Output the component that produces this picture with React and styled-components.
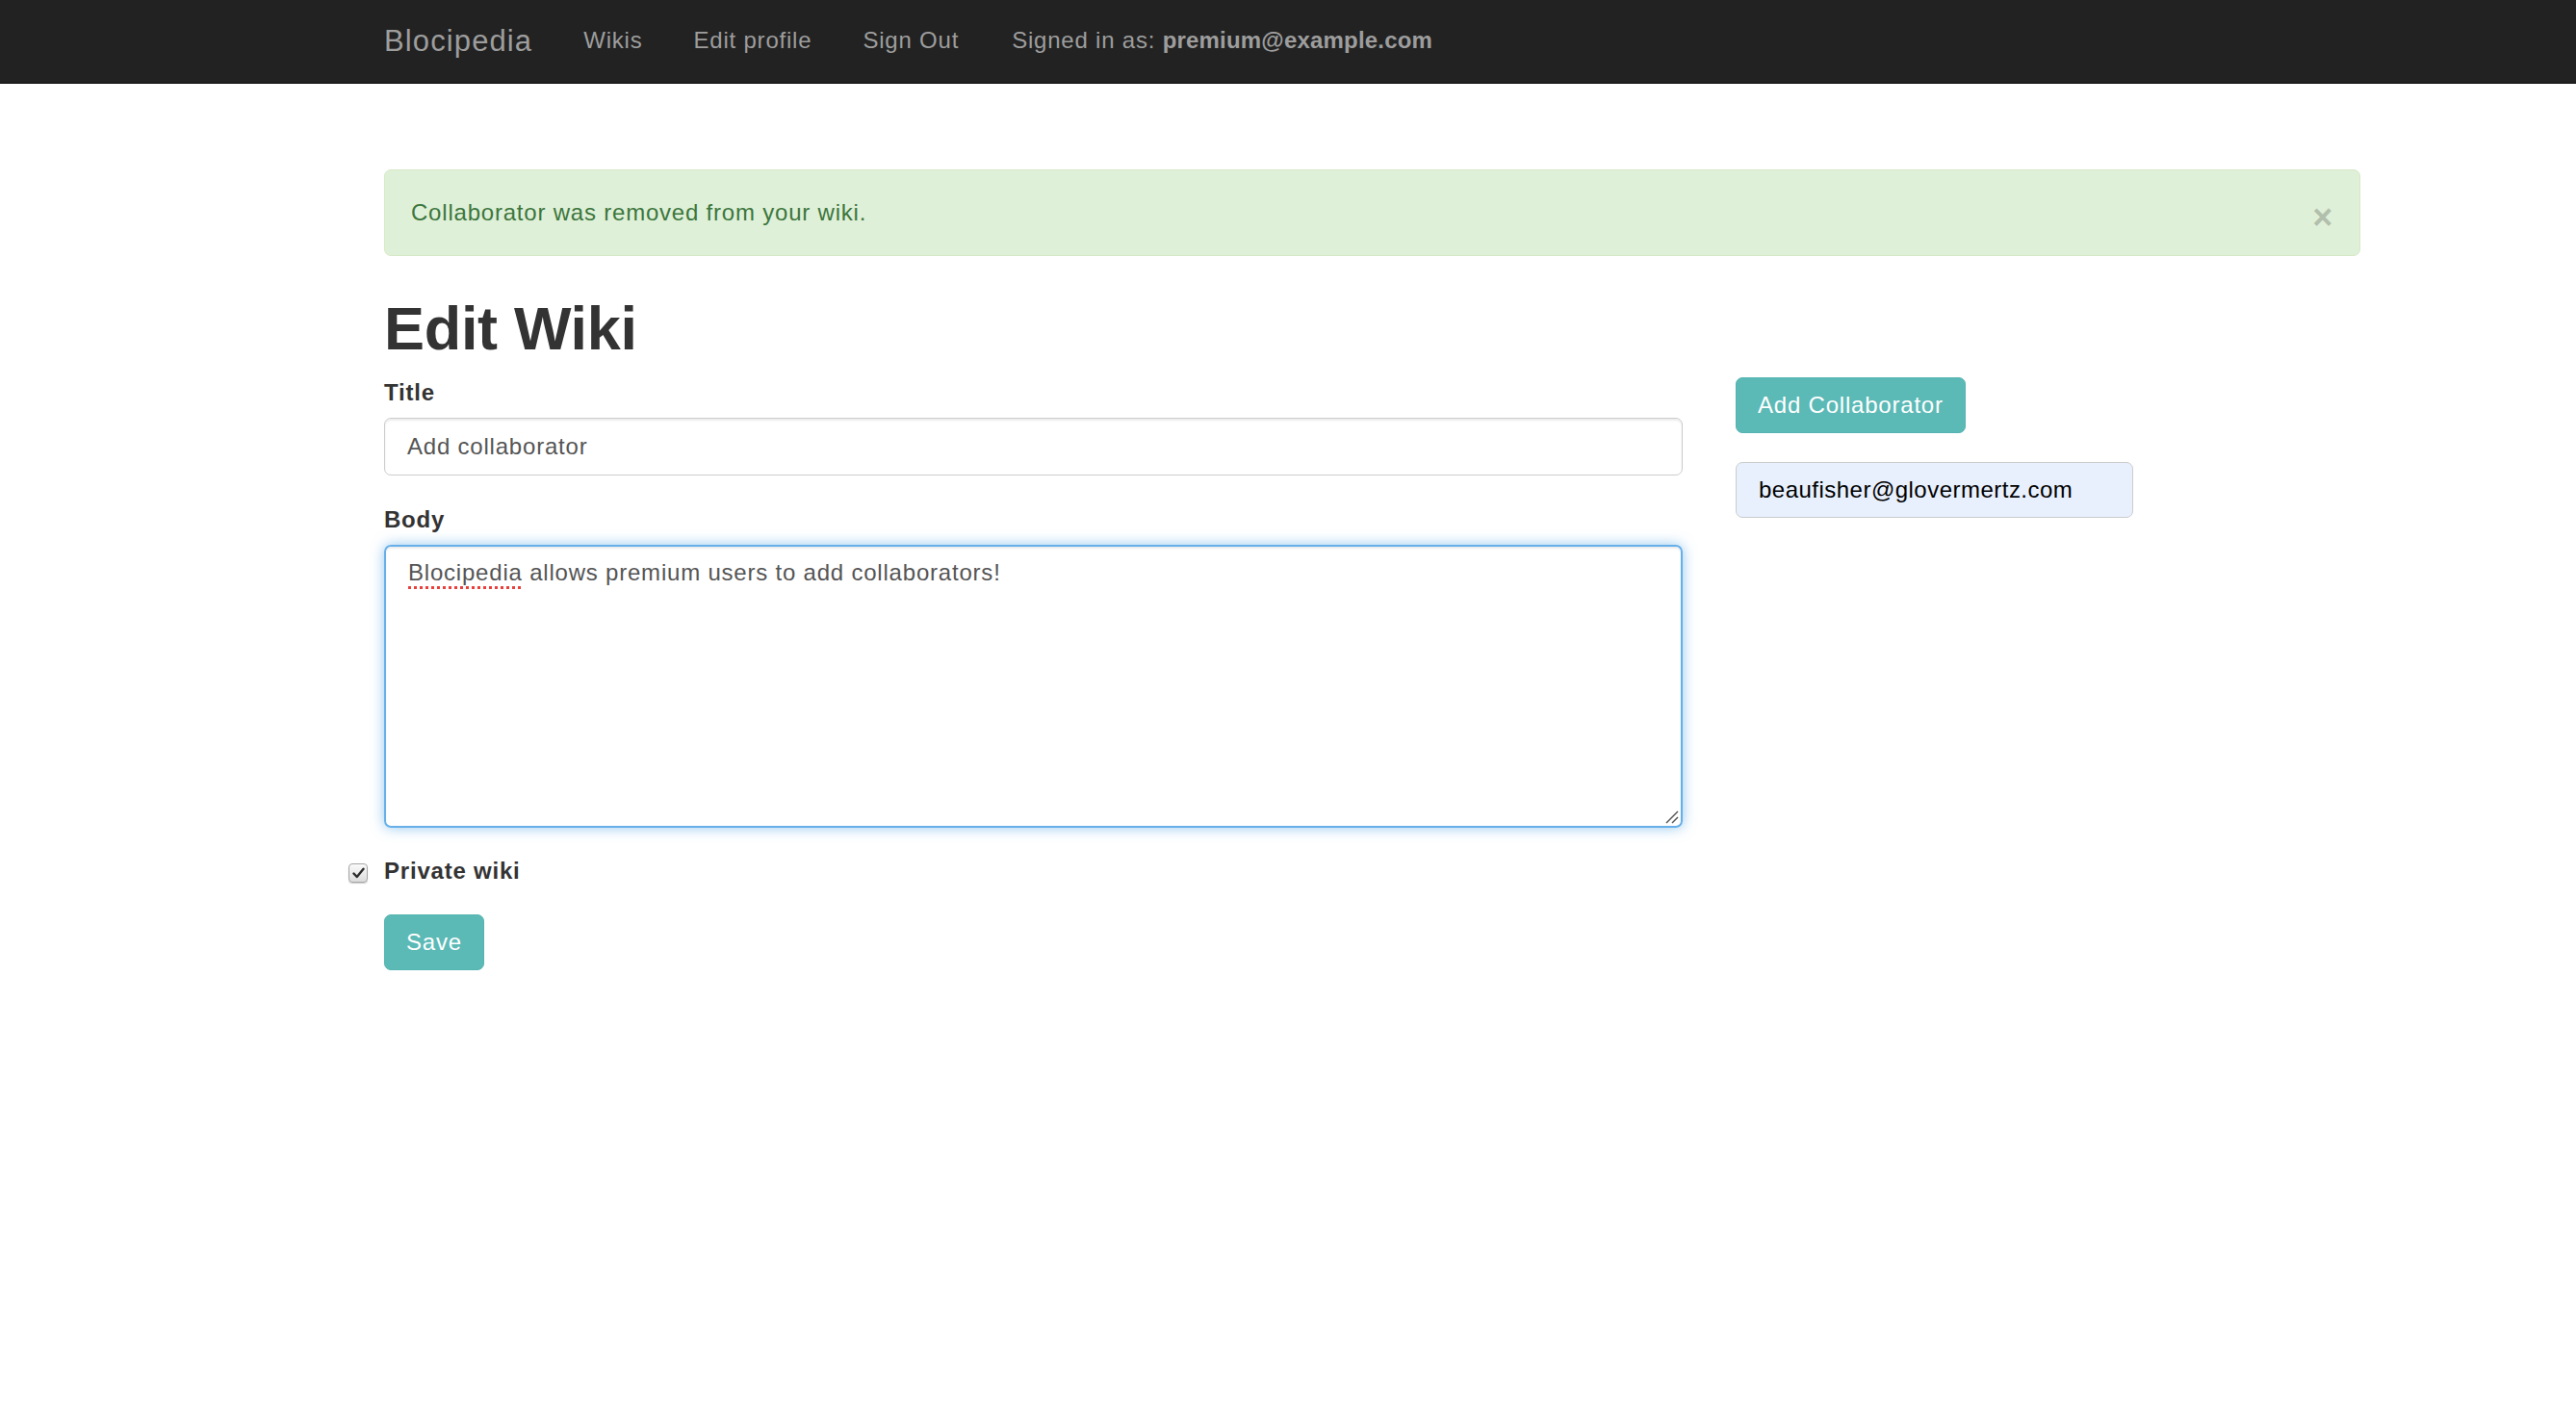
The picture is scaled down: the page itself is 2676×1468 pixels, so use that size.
import styled, { createGlobalStyle } from 'styled-components'

const GlobalStyle = createGlobalStyle`
  html, body {
    margin: 0;
    padding: 0;
    background: #fff;
  }

  body {
    font-family: "Liberation Sans", Arial, sans-serif;
    font-size: 24px;
    line-height: 34px;
    color: #333;
    letter-spacing: 0.033em;
  }
`

const Navbar = styled.nav`
  height: 86px;
  background: #222;
  border-bottom: 1px solid #080808;
`

const NavInner = styled.div`
  display: flex;
  align-items: center;
  gap: 53px;
  height: 100%;
  margin-left: 399px;
  padding-bottom: 3px;
  box-sizing: border-box;
`

const Brand = styled.a`
  font-size: 31px;
  letter-spacing: 0.036em;
  color: #9d9d9d;
  text-decoration: none;
  margin-top: 2px;
`

const NavLink = styled.a`
  color: #9d9d9d;
  text-decoration: none;
`

const NavText = styled.span`
  color: #9d9d9d;
  margin-left: 2px;

  strong {
    font-weight: 700;
    letter-spacing: 0.008em;
  }
`

const Container = styled.main`
  width: 2053px;
  margin-left: 399px;
  padding-top: 89px;
`

const Alert = styled.div`
  display: flex;
  justify-content: space-between;
  align-items: center;
  padding: 27px;
  background: #dff0d8;
  border: 1px solid #d6e9c6;
  border-radius: 7px;
  color: #3c763d;
`

const Close = styled.span`
  font-size: 36px;
  font-weight: 700;
  line-height: 34px;
  transform: translateY(5px);
  color: #000;
  opacity: 0.2;
  text-shadow: 0 1px 0 #fff;
`

const Title = styled.h1`
  margin: 41px 0 15px;
  font-size: 63px;
  line-height: 69px;
  font-weight: 700;
  letter-spacing: -0.3px;
  color: #333;
`

const Row = styled.div`
  display: grid;
  grid-template-columns: 1349px 1fr;
  column-gap: 55px;
  align-items: start;
`

const Form = styled.form`
  display: flex;
  flex-direction: column;
`

const FormGroup = styled.div`
  display: flex;
  flex-direction: column;
  margin-bottom: ${p => p.$last ? '28px' : '29px'};
`

const Label = styled.label`
  font-weight: 700;
  margin-bottom: 9px;
`

const Input = styled.div`
  box-sizing: border-box;
  height: 60px;
  padding: 0 23px;
  display: flex;
  align-items: center;
  border: 1px solid #ccc;
  border-radius: 7px;
  box-shadow: inset 0 2px 2px rgba(0, 0, 0, 0.075);
  color: #555;
`

const TextArea = styled.div`
  position: relative;
  box-sizing: border-box;
  height: 294px;
  padding: 10px 23px;
  border: 2px solid #66afe9;
  border-radius: 7px;
  box-shadow: inset 0 2px 2px rgba(0, 0, 0, 0.075), 0 0 14px rgba(102, 175, 233, 0.7);
  color: #555;
`

const Misspelled = styled.span`
  text-decoration: underline dotted #e8413c;
  text-decoration-thickness: 3px;
  text-underline-offset: 6px;
`

const Grip = styled.svg`
  position: absolute;
  right: 2px;
  bottom: 2px;
`

const CheckRow = styled.label`
  display: flex;
  align-items: center;
  gap: 17px;
  margin-left: -37px;
  font-weight: 700;
  margin-bottom: 28px;
`

const CheckBox = styled.span`
  box-sizing: border-box;
  width: 20px;
  height: 20px;
  display: flex;
  align-items: center;
  justify-content: center;
  margin-top: 3px;
  border: 1px solid #a6a6a6;
  border-radius: 4px;
  background: linear-gradient(#fafafa, #dcdcdc);
  box-shadow: 0 1px 1px rgba(0, 0, 0, 0.2);
`

const Button = styled.button`
  align-self: flex-start;
  box-sizing: border-box;
  height: 58px;
  padding: 0 22px;
  border: 1px solid #55b4b1;
  border-radius: 7px;
  background: #5bb9b6;
  color: #fff;
  font-family: inherit;
  font-size: 24px;
  letter-spacing: 0.033em;
  cursor: pointer;
`

const Side = styled.div`
  display: flex;
  flex-direction: column;
  gap: 30px;
  padding-top: 1px;
`

const EmailInput = styled.div`
  box-sizing: border-box;
  width: 413px;
  height: 58px;
  padding: 0 23px;
  display: flex;
  align-items: center;
  background: #e8f0fe;
  border: 1px solid #ccc;
  border-radius: 7px;
  color: #000;
  letter-spacing: 0.02em;
`

export default function App () {
  return (
    <>
      <GlobalStyle />
      <Navbar>
        <NavInner>
          <Brand href='#'>Blocipedia</Brand>
          <NavLink href='#'>Wikis</NavLink>
          <NavLink href='#'>Edit profile</NavLink>
          <NavLink href='#'>Sign Out</NavLink>
          <NavText>Signed in as: <strong>premium@example.com</strong></NavText>
        </NavInner>
      </Navbar>

      <Container>
        <Alert>
          <span>Collaborator was removed from your wiki.</span>
          <Close>&times;</Close>
        </Alert>

        <Title>Edit Wiki</Title>

        <Row>
          <Form>
            <FormGroup>
              <Label>Title</Label>
              <Input>Add collaborator</Input>
            </FormGroup>
            <FormGroup $last>
              <Label>Body</Label>
              <TextArea>
                <Misspelled>Blocipedia</Misspelled> allows premium users to add collaborators!
                <Grip width='14' height='14' viewBox='0 0 14 14'>
                  <line x1='1' y1='13' x2='13' y2='1' stroke='#555' strokeWidth='1.4' />
                  <line x1='7' y1='13' x2='13' y2='7' stroke='#555' strokeWidth='1.4' />
                </Grip>
              </TextArea>
            </FormGroup>
            <CheckRow>
              <CheckBox>
                <svg width='13' height='12' viewBox='0 0 13 12'>
                  <path d='M1.5 6.5 L4.8 10 L11.5 1.8' fill='none' stroke='#2b2b2b' strokeWidth='2.4' strokeLinecap='round' strokeLinejoin='round' />
                </svg>
              </CheckBox>
              Private wiki
            </CheckRow>
            <Button type='button'>Save</Button>
          </Form>

          <Side>
            <Button type='button'>Add Collaborator</Button>
            <EmailInput>beaufisher@glovermertz.com</EmailInput>
          </Side>
        </Row>
      </Container>
    </>
  )
}
